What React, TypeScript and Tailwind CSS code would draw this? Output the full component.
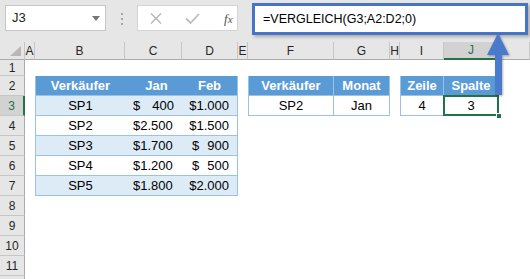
import React from "react";
import clsx from "clsx";

const hdr = "bg-[#5b9bd5] text-white font-bold justify-center border-b border-[#9bc2e6]";
const band = "bg-[#ddebf7] border-b border-[#9bc2e6]";
const plain = "bg-white border-b border-[#9bc2e6]";

function Cell({ w, className, children }: { w: string; className?: string; children?: React.ReactNode }) {
  return <div className={clsx("shrink-0 h-full flex items-center", w, className)}>{children}</div>;
}

function Money({ v, d }: { v: string; d?: boolean }) {
  return (
    <div className={clsx("flex w-full justify-between pr-[8px]", d ? "pl-[10px]" : "pl-[8px]")}>
      <span>$</span>
      <span>{v}</span>
    </div>
  );
}

function Row({ n, h = "h-[20px]", active, children }: { n?: number; h?: string; active?: boolean; children?: React.ReactNode }) {
  return (
    <div className={clsx("flex shrink-0", h)}>
      <div
        className={clsx(
          "w-[25px] shrink-0 h-full flex items-center justify-center text-[12px] border-b border-[#c6c6c6]",
          active
            ? "bg-[#d2d2d2] text-[#217346] border-r-2 border-r-[#217346]"
            : "bg-[#e6e6e6] text-[#262626] border-r border-r-[#ababab]"
        )}
      >
        {n}
      </div>
      {children}
    </div>
  );
}

const sales = [
  { s: "SP1", jan: "400", feb: "1.000" },
  { s: "SP2", jan: "2.500", feb: "1.500" },
  { s: "SP3", jan: "1.700", feb: "900" },
  { s: "SP4", jan: "1.200", feb: "500" },
  { s: "SP5", jan: "1.800", feb: "2.000" },
];

export default function App() {
  const cols = [
    { k: "A", w: "w-[10px]" },
    { k: "B", w: "w-[90px]" },
    { k: "C", w: "w-[57px]" },
    { k: "D", w: "w-[56px]" },
    { k: "E", w: "w-[10px]" },
    { k: "F", w: "w-[86px]" },
    { k: "G", w: "w-[56px]" },
    { k: "H", w: "w-[10px]" },
    { k: "I", w: "w-[44px]" },
    { k: "J", w: "w-[55px]" },
    { k: "", w: "w-[31px]" },
  ];

  return (
    <div className="relative w-[530px] h-[279px] overflow-hidden bg-white flex flex-col font-['Liberation_Sans',Arial,sans-serif] text-black">
      {/* formula bar */}
      <div className="h-[42px] shrink-0 bg-[#e6e6e6] flex items-start">
        <div className="ml-[5px] mt-[5px] w-[101px] h-[26px] bg-white border border-[#c6c6c6] flex items-center justify-between pl-[6px] pr-[5px]">
          <span className="text-[13px] text-[#222]">J3</span>
          <svg width="8" height="5" viewBox="0 0 8 5">
            <path d="M0 0H8L4 5Z" fill="#777" />
          </svg>
        </div>
        <div className="ml-[15px] mt-[13px] flex flex-col gap-[3px]">
          <div className="w-[2px] h-[2px] bg-[#a6a6a6]" />
          <div className="w-[2px] h-[2px] bg-[#a6a6a6]" />
          <div className="w-[2px] h-[2px] bg-[#a6a6a6]" />
        </div>
        <div className="ml-[14px] mt-[5px] w-[101px] h-[26px] bg-white border border-[#d4d4d4] flex items-center pl-[12px] pr-[4px]">
          <svg width="12" height="11" viewBox="0 0 12 11">
            <path d="M1 0.5L11 10.5M11 0.5L1 10.5" stroke="#b4b4b4" strokeWidth="1.3" />
          </svg>
          <svg className="ml-[23px]" width="15" height="11" viewBox="0 0 15 11">
            <path d="M1 5.5L5.5 10L14 1" stroke="#bdbdbd" strokeWidth="1.8" fill="none" />
          </svg>
          <span className="ml-[24px] text-[13px] italic font-['Liberation_Serif',serif] text-[#505050] leading-none">
            f<span className="text-[11px]">x</span>
          </span>
        </div>
        <div className="ml-[14px] mt-[3px] w-[276px] h-[32px] bg-white border-[3px] border-[#4674c6] shadow-[2px_2px_3px_rgba(0,0,0,0.25)] flex items-center pl-[8px]">
          <span className="text-[12.5px] text-black">=VERGLEICH(G3;A2:D2;0)</span>
        </div>
      </div>

      {/* column header */}
      <div className="flex h-[18px] shrink-0 bg-[#e6e6e6]">
        <div className="w-[25px] shrink-0 h-full border-r border-[#c6c6c6] border-b border-b-[#ababab] flex items-end justify-end pr-[3px] pb-[3px]">
          <svg width="11" height="10" viewBox="0 0 11 10">
            <path d="M11 0V10H0Z" fill="#b8b8b8" />
          </svg>
        </div>
        {cols.map((c) => (
          <div
            key={c.k + c.w}
            className={clsx(
              "shrink-0 h-full flex items-center justify-center text-[12px] border-r border-[#c6c6c6]",
              c.w,
              c.k === "J" ? "bg-[#d2d2d2] text-[#217346] border-b-2 border-b-[#217346]" : "text-[#262626] border-b border-b-[#ababab]"
            )}
          >
            {c.k}
          </div>
        ))}
      </div>

      <div className="flex flex-col flex-1 text-[13px]">
        <Row n={1} h="h-[16px]" />
        <Row n={2}>
          <Cell w="w-[10px]" />
          <Cell w="w-[90px]" className={clsx(hdr, "border-l border-l-[#9bc2e6]")}>Verkäufer</Cell>
          <Cell w="w-[57px]" className={clsx(hdr, "pl-[6px]")}>Jan</Cell>
          <Cell w="w-[56px]" className={clsx(hdr, "border-r border-r-[#9bc2e6]")}>Feb</Cell>
          <Cell w="w-[10px]" />
          <Cell w="w-[86px]" className={clsx(hdr, "border-l border-l-[#9bc2e6] border-r border-r-[#9bc2e6]")}>Verkäufer</Cell>
          <Cell w="w-[56px]" className={clsx(hdr, "border-r border-r-[#9bc2e6]")}>Monat</Cell>
          <Cell w="w-[10px]" />
          <Cell w="w-[44px]" className={clsx(hdr, "border-l border-l-[#9bc2e6] border-r border-r-[#9bc2e6]")}>Zeile</Cell>
          <Cell w="w-[55px]" className={clsx(hdr, "border-r border-r-[#9bc2e6]")}>Spalte</Cell>
        </Row>
        {sales.map((r, i) => {
          const bg = i % 2 === 0 ? band : plain;
          return (
            <Row key={r.s} n={i + 3} active={i === 0}>
              <Cell w="w-[10px]" />
              <Cell w="w-[90px]" className={clsx(bg, "justify-center border-l border-l-[#9bc2e6]")}>{r.s}</Cell>
              <Cell w="w-[57px]" className={bg}>
                {r.jan.length <= 3 ? <Money v={r.jan} /> : <div className="w-full pl-[8px]">${r.jan}</div>}
              </Cell>
              <Cell w="w-[56px]" className={clsx(bg, "border-r border-r-[#9bc2e6]")}>
                {r.feb.length <= 3 ? <Money v={r.feb} d /> : <div className="w-full text-right pr-[8px]">${r.feb}</div>}
              </Cell>
              {i === 0 && (
                <>
                  <Cell w="w-[10px]" />
                  <Cell w="w-[86px]" className={clsx(plain, "justify-center border-l border-l-[#9bc2e6] border-r border-r-[#9bc2e6]")}>SP2</Cell>
                  <Cell w="w-[56px]" className={clsx(plain, "justify-center border-r border-r-[#9bc2e6]")}>Jan</Cell>
                  <Cell w="w-[10px]" />
                  <Cell w="w-[44px]" className={clsx(plain, "justify-center border-l border-l-[#9bc2e6] border-r border-r-[#9bc2e6]")}>4</Cell>
                  <Cell w="w-[55px]" className={clsx(plain, "relative justify-center border-r border-r-[#9bc2e6]")}>
                    3
                    <div className="absolute left-[-1px] top-[-1px] right-[-1px] bottom-[-1px] border-2 border-[#217346]" />
                    <div className="absolute right-[-4px] bottom-[-4px] w-[6px] h-[6px] bg-[#217346] border border-white" />
                  </Cell>
                </>
              )}
            </Row>
          );
        })}
        {[8, 9, 10, 11].map((n) => (
          <Row key={n} n={n} />
        ))}
        <Row h="h-[20px]" />
      </div>

      {/* arrow from J3 to the formula */}
      <svg
        className="absolute left-[486px] top-[32px] drop-shadow-[1px_1px_1px_rgba(0,0,0,0.3)]"
        width="24"
        height="64"
        viewBox="0 0 24 64"
      >
        <path d="M12 1L23 23H16V63H9V23H1Z" fill="#4a7acb" />
      </svg>
    </div>
  );
}
